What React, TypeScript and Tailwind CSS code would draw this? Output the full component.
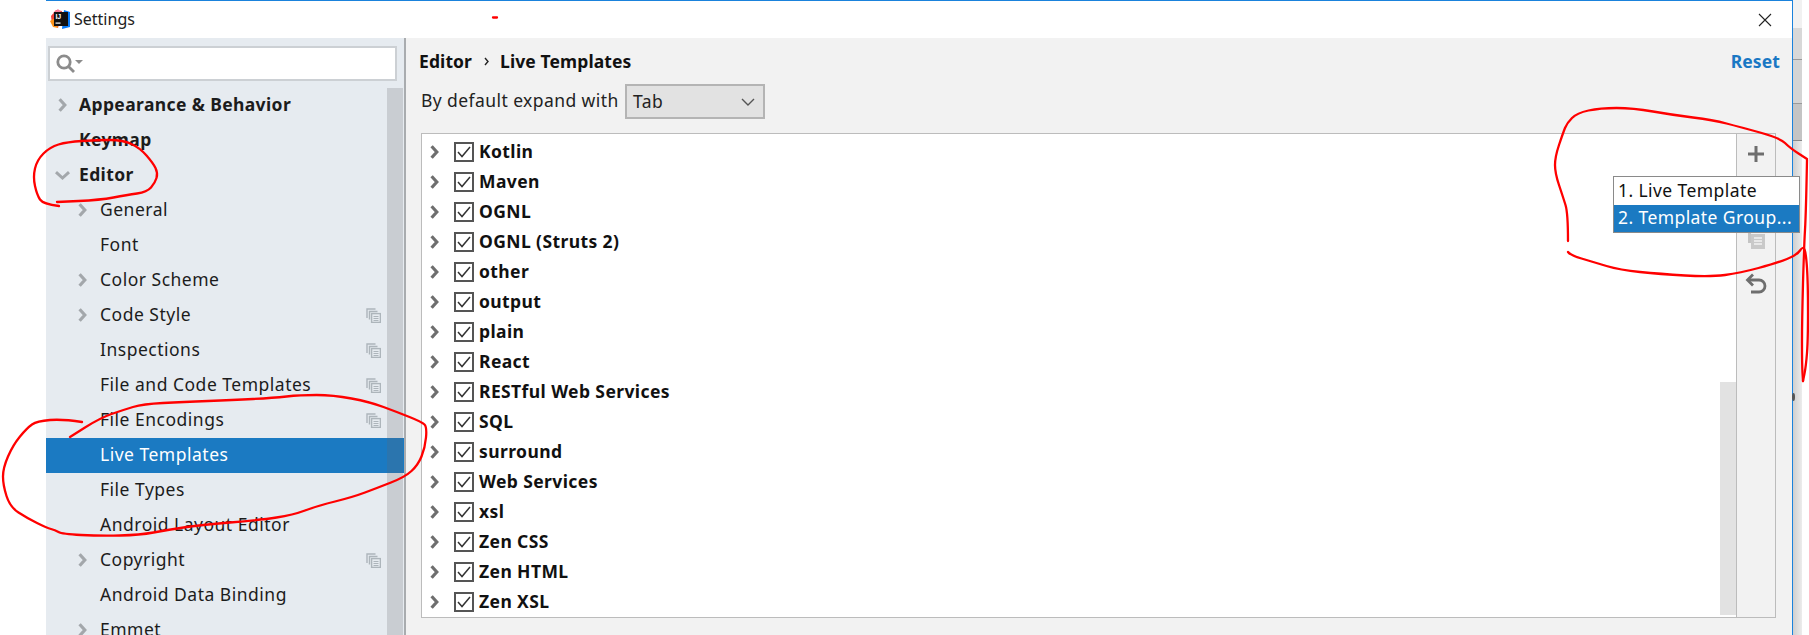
const FONT = "font-['Noto_Sans','Open_Sans',sans-serif]";

const sidebarItems = [
  { label: "Appearance & Behavior", level: 0, arrow: "right" },
  { label: "Keymap", level: 0 },
  { label: "Editor", level: 0, arrow: "down" },
  { label: "General", level: 1, arrow: "right" },
  { label: "Font", level: 1 },
  { label: "Color Scheme", level: 1, arrow: "right" },
  { label: "Code Style", level: 1, arrow: "right", copy: true },
  { label: "Inspections", level: 1, copy: true },
  { label: "File and Code Templates", level: 1, copy: true },
  { label: "File Encodings", level: 1, copy: true },
  { label: "Live Templates", level: 1, selected: true },
  { label: "File Types", level: 1 },
  { label: "Android Layout Editor", level: 1 },
  { label: "Copyright", level: 1, arrow: "right", copy: true },
  { label: "Android Data Binding", level: 1 },
  { label: "Emmet", level: 1, arrow: "right" },
];

const groups = [
  "Kotlin", "Maven", "OGNL", "OGNL (Struts 2)", "other", "output", "plain", "React",
  "RESTful Web Services", "SQL", "surround", "Web Services", "xsl", "Zen CSS", "Zen HTML", "Zen XSL",
];

function Chevron({ className }: { className: string }) {
  return (
    <svg width="9" height="14" viewBox="0 0 9 14" className={className} fill="none" stroke="currentColor" strokeWidth="3.2">
      <path d="M1.6 1.2 L6.8 7 L1.6 12.8" />
    </svg>
  );
}

function ChevronDown() {
  return (
    <svg width="15" height="9" viewBox="0 0 15 9" className="text-[#a3a7ab]" fill="none" stroke="currentColor" strokeWidth="3">
      <path d="M1 1.2 L7.5 7 L14 1.2" />
    </svg>
  );
}

function CopyIcon() {
  return (
    <svg width="15" height="15" viewBox="0 0 15 15" className="text-[#adb5bb]" fill="none" stroke="currentColor" strokeWidth="1.4">
      <path d="M9.5 1 H1 V10" />
      <path d="M11.5 3.5 H3.5 V11.5" />
      <rect x="5.6" y="5.6" width="8.8" height="8.8" fill="#e6ebf0" />
      <path d="M7.5 8.5 H12.5 M7.5 10.5 H12.5 M7.5 12.5 H12.5" strokeWidth="1.2" />
    </svg>
  );
}

function AppLogo() {
  return (
    <svg width="21" height="21" viewBox="0 0 21 21" className="mr-[3px]">
      <path d="M1 7 L6 1 L12 2 L8 19 L2 15 Z" fill="#f0433a" />
      <path d="M3 4 L8 0 L12 4 L6 9 Z" fill="#f97a9a" />
      <path d="M0 12 L5 9 L8 19 L3 18 Z" fill="#ff9419" />
      <path d="M14 1 L20 3 L20 18 L12 20 Z" fill="#087cfa" />
      <rect x="4" y="3" width="14" height="14" fill="#111" />
      <text x="5.4" y="10" fontSize="7" fontWeight="700" fill="#fff" fontFamily="Liberation Sans">IJ</text>
      <rect x="5.5" y="13.5" width="5" height="1.2" fill="#fff" />
    </svg>
  );
}

function SidebarRow({ item }: { item: (typeof sidebarItems)[number] }) {
  const bold = item.level === 0;
  return (
    <div
      className={`relative flex h-[35px] shrink-0 items-center text-[17.5px] ${
        item.selected ? "bg-[#1b7ac2] text-white" : "text-[#1c1c1c]"
      } ${bold ? "pl-[33px] font-bold tracking-[0.38px]" : "pl-[54px] tracking-[0.5px]"}`}
    >
      {item.arrow === "right" && (
        <Chevron className={`absolute top-[10px] text-[#a3a7ab] ${bold ? "left-[12px]" : "left-[32px]"}`} />
      )}
      {item.arrow === "down" && (
        <span className="absolute left-[9px] top-[13px]">
          <ChevronDown />
        </span>
      )}
      <span className="mb-[2px]">{item.label}</span>
      {item.copy && (
        <span className="absolute left-[320px] top-[10px]">
          <CopyIcon />
        </span>
      )}
    </div>
  );
}

function GroupRow({ name }: { name: string }) {
  return (
    <div className="flex h-[30px] shrink-0 items-center pl-[8px]">
      <Chevron className="text-[#6e6e6e]" />
      <span className="ml-[15px] flex h-[20px] w-[20px] items-center justify-center border-2 border-[#555] bg-white">
        <svg width="14" height="12" viewBox="0 0 14 12" fill="none" stroke="#333" strokeWidth="1.5">
          <path d="M1 6 L5 10.5 L13 1" />
        </svg>
      </span>
      <span className="mb-[2px] ml-[5px] text-[17.5px] font-bold tracking-[0.4px] text-[#111]">{name}</span>
    </div>
  );
}

// freehand strokes, points get smoothed into quadratic curves
function smooth(p: number[][]) {
  let d = `M${p[0][0]} ${p[0][1]}`;
  for (let i = 1; i < p.length - 1; i++) {
    const mx = (p[i][0] + p[i + 1][0]) / 2;
    const my = (p[i][1] + p[i + 1][1]) / 2;
    d += ` Q${p[i][0]} ${p[i][1]} ${mx} ${my}`;
  }
  const last = p[p.length - 1];
  return `${d} L${last[0]} ${last[1]}`;
}

function Annotations() {
  const strokes = [
    // Editor ring
    [[59, 206], [43, 204], [37, 195], [33, 177], [37, 160], [50, 147], [67, 142], [97, 140], [123, 140], [140, 148], [153, 163], [158, 173], [155, 183], [147, 192], [127, 195], [100, 200], [57, 202]],
    // Live Templates ring
    [[82, 422], [63, 419], [37, 421], [27, 428], [13, 445], [3, 468], [3, 485], [10, 507], [27, 518], [47, 528], [55, 530], [62, 534], [100, 536], [140, 535], [167, 530], [200, 525], [260, 520], [293, 515], [317, 506], [353, 497], [377, 488], [405, 477], [418, 465], [425, 448], [427, 427], [422, 422], [397, 412], [370, 402], [333, 395], [300, 395], [273, 398], [233, 400], [183, 402], [143, 404], [123, 410], [100, 418], [70, 437]],
    // Popup ring
    [[1568, 241], [1568, 213], [1563, 197], [1555, 173], [1555, 157], [1563, 133], [1567, 123], [1577, 113], [1600, 108], [1633, 108], [1673, 115], [1713, 120], [1740, 127], [1780, 138], [1790, 148], [1807, 159]],
    [[1568, 252], [1570, 255], [1593, 262], [1620, 270], [1660, 274], [1710, 277], [1740, 273], [1777, 263], [1797, 255], [1803, 246], [1806, 253], [1808, 283], [1808, 340], [1806, 366], [1803, 381]],
    [[1807, 160], [1806, 213], [1804, 247], [1802, 320], [1802, 365], [1803, 381]],
  ];
  return (
    <svg className="pointer-events-none absolute left-0 top-0" width="1809" height="635" fill="none" stroke="#f00" strokeWidth="2.3" strokeLinecap="round" strokeLinejoin="round">
      {strokes.map(p => <path key={p[0].join()} d={smooth(p)} />)}
      <path d="M493 17.5 L497 17.5" />
      <ellipse cx="1793.5" cy="397" rx="1.5" ry="4" fill="#555" stroke="none" />
    </svg>
  );
}

export default function App() {
  return (
    <div className={`relative flex h-[635px] w-[1809px] overflow-hidden bg-white ${FONT}`}>
      <div className="ml-[46px] flex h-[635px] w-[1747px] shrink-0 flex-col border-r border-t border-r-[#1a82dc] border-t-[#1a82dc] bg-[#f2f2f2]">
        <div className="flex h-[37px] shrink-0 items-center bg-white pl-[4px] text-[16px] text-[#222]">
          <AppLogo />
          <span className="mb-[1px]">Settings</span>
          <svg width="14" height="14" viewBox="0 0 14 14" className="ml-auto mr-[20px]" stroke="#222" strokeWidth="1.1">
            <path d="M1 1 L13 13 M13 1 L1 13" />
          </svg>
        </div>
        <div className="flex min-h-0 flex-1">
          <aside className="flex w-[360px] shrink-0 flex-col border-r-2 border-[#a9acaf] bg-[#e6ebf0]">
            <div className="ml-[2px] mt-[8px] flex h-[35px] w-[349px] shrink-0 items-center border-2 border-[#ccd0d4] bg-white pl-[6px]">
              <svg width="28" height="20" viewBox="0 0 28 20" fill="none" stroke="#8c8c8c" strokeWidth="2.8">
                <circle cx="8" cy="8" r="6.2" />
                <path d="M12.5 12.5 L18 18" />
                <path d="M19 6 H27 L23 10 Z" fill="#8c8c8c" stroke="none" />
              </svg>
            </div>
            <div className="relative mt-[7px] flex min-h-0 flex-1 flex-col">
              {sidebarItems.map(item => <SidebarRow key={item.label} item={item} />)}
              <div className="absolute bottom-0 right-[1px] top-0 w-[16px] bg-[#626468]/[.22]" />
            </div>
          </aside>
          <main className="flex min-w-0 flex-1 flex-col">
            <div className="flex h-[46px] shrink-0 items-center pl-[13px] pr-[12px] text-[17.5px] font-bold tracking-[0.1px] text-[#111]">
              <span>Editor</span>
              <svg width="5" height="9" viewBox="0 0 5 9" className="ml-[12px] mr-[11px]" fill="none" stroke="#222" strokeWidth="1.4">
                <path d="M1 1 L4 4.5 L1 8" />
              </svg>
              <span>Live Templates</span>
              <span className="ml-auto text-[#1a78c4]">Reset</span>
            </div>
            <div className="ml-[15px] flex h-[35px] shrink-0 items-center text-[17.5px] tracking-[0.42px] text-[#222]">
              <span className="mb-[2px] w-[204px]">By default expand with</span>
              <div className="flex h-[35px] w-[140px] items-center justify-between border-2 border-[#b4b4b4] bg-[#e2e2e2] pl-[6px] pr-[8px]">
                <span>Tab</span>
                <svg width="14" height="8" viewBox="0 0 14 8" fill="none" stroke="#555" strokeWidth="1.4">
                  <path d="M1 1 L7 7 L13 1" />
                </svg>
              </div>
            </div>
            <div className="ml-[15px] mt-[14px] flex h-[485px] w-[1355px] shrink-0 border border-[#bcbcbc]">
              <div className="relative flex min-w-0 flex-1 flex-col bg-white pt-[3px]">
                {groups.map(name => <GroupRow key={name} name={name} />)}
                <div className="absolute bottom-0 right-0 top-[248px] w-[16px] border-b-2 border-b-white bg-[#e2e2e2]" />
              </div>
              <div className="flex w-[39px] shrink-0 flex-col items-center border-l border-[#bcbcbc] bg-[#f2f2f2] pt-[11px]">
                <svg width="18" height="18" viewBox="0 0 18 18" stroke="#6e6e6e" strokeWidth="3">
                  <path d="M9 1 V17 M1 9 H17" />
                </svg>
                <svg width="20" height="20" viewBox="0 0 20 20" className="mt-[66px]">
                  <path d="M2 2 H5 V14 H2 Z" fill="#c4c4c4" />
                  <rect x="5" y="5" width="14" height="15" fill="#c9c9c9" />
                  <path d="M8 9 H16 M8 12 H16 M8 15 H16" stroke="#f2f2f2" strokeWidth="1.4" />
                </svg>
                <svg width="22" height="22" viewBox="0 0 22 22" className="mt-[24px]" fill="none" stroke="#6e6e6e" strokeWidth="2.8">
                  <path d="M3 7 H14 A6 6 0 0 1 14 19 H6" />
                  <path d="M8 1.5 L2.5 7 L8 12.5" />
                </svg>
              </div>
            </div>
          </main>
        </div>
      </div>
      <div className="flex w-[9px] shrink-0 flex-col bg-gradient-to-r from-[#cfcfcf] to-[#ececec]">
        <div className="h-[28px] shrink-0 bg-[#f1f1f1]" />
        <div className="h-[32px] shrink-0 border-b border-[#9a9a9a] bg-[#d8d8d8]" />
        <div className="h-[44px] shrink-0 border-b border-[#9a9a9a] bg-[#d4d4d4]" />
        <div className="h-[37px] shrink-0 border-b border-[#888] bg-[#c4c4c4]" />
      </div>
      <div className="absolute left-[1613px] top-[176px] flex h-[57px] w-[187px] flex-col border border-[#8a8a8a] bg-white text-[17.5px] tracking-[0.42px] text-[#111]">
        <div className="flex h-[28px] items-center pb-[2px] pl-[4px]">1. Live Template</div>
        <div className="flex h-[27px] items-center bg-[#1b7ac2] pb-[2px] pl-[4px] text-white">2. Template Group...</div>
      </div>
      <Annotations />
    </div>
  );
}
